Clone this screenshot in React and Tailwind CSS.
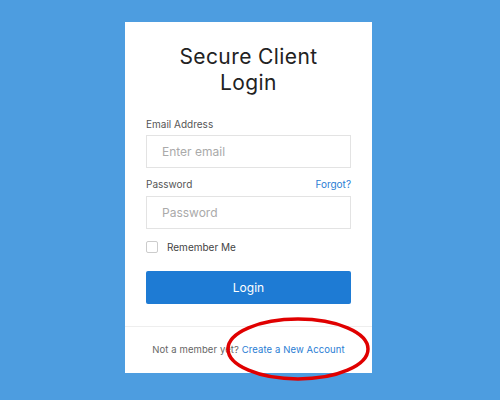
export default function App() {
  return (
    <div className="w-[500px] h-[400px] bg-[#4d9de0] relative overflow-hidden" style={{ fontFamily: "Inter, 'Noto Sans', sans-serif" }}>
      <div className="absolute left-[125px] top-[22px] w-[247px] h-[351px] bg-white flex flex-col">
        <div className="px-[21px] pt-[22px]">
          <h1 className="text-center text-[21px] leading-[26px] tracking-[0.4px] text-[#222] font-normal">Secure Client<br />Login</h1>
          <div className="mt-[22px] text-[10px] leading-[12px] text-[#555]">Email Address</div>
          <div className="mt-[5px] h-[33px] border border-[#e3e3e3] flex items-center px-[15px] text-[12px] text-[#aaa]">Enter email</div>
          <div className="mt-[10px] flex justify-between text-[10px] leading-[12px]">
            <span className="text-[#555]">Password</span>
            <span className="text-[#2a7dd4]">Forgot?</span>
          </div>
          <div className="mt-[6px] h-[33px] border border-[#e3e3e3] flex items-center px-[15px] text-[12px] text-[#aaa]">Password</div>
          <div className="mt-[12px] h-[12px] flex items-center gap-[9px]">
            <div className="w-[12px] h-[12px] border border-[#ccc] rounded-[2px]" />
            <span className="text-[10px] leading-[12px] text-[#444]">Remember Me</span>
          </div>
          <div className="mt-[18px] h-[33px] bg-[#1e7bd4] rounded-[2px] flex items-center justify-center text-white text-[12px]">Login</div>
        </div>
        <div className="mt-[22px] border-t border-[#eee]" />
        <div className="flex-1 flex items-center justify-center text-[9.5px] tracking-[0.1px]">
          <span className="text-[#666]">Not a member yet?&nbsp;</span>
          <span className="text-[#2a7dd4]">Create a New Account</span>
        </div>
      </div>
      <svg className="absolute left-0 top-0" width="500" height="400">
        <ellipse cx="298" cy="349" rx="70" ry="30" fill="none" stroke="#e00000" strokeWidth="3.5" />
      </svg>
    </div>
  );
}
